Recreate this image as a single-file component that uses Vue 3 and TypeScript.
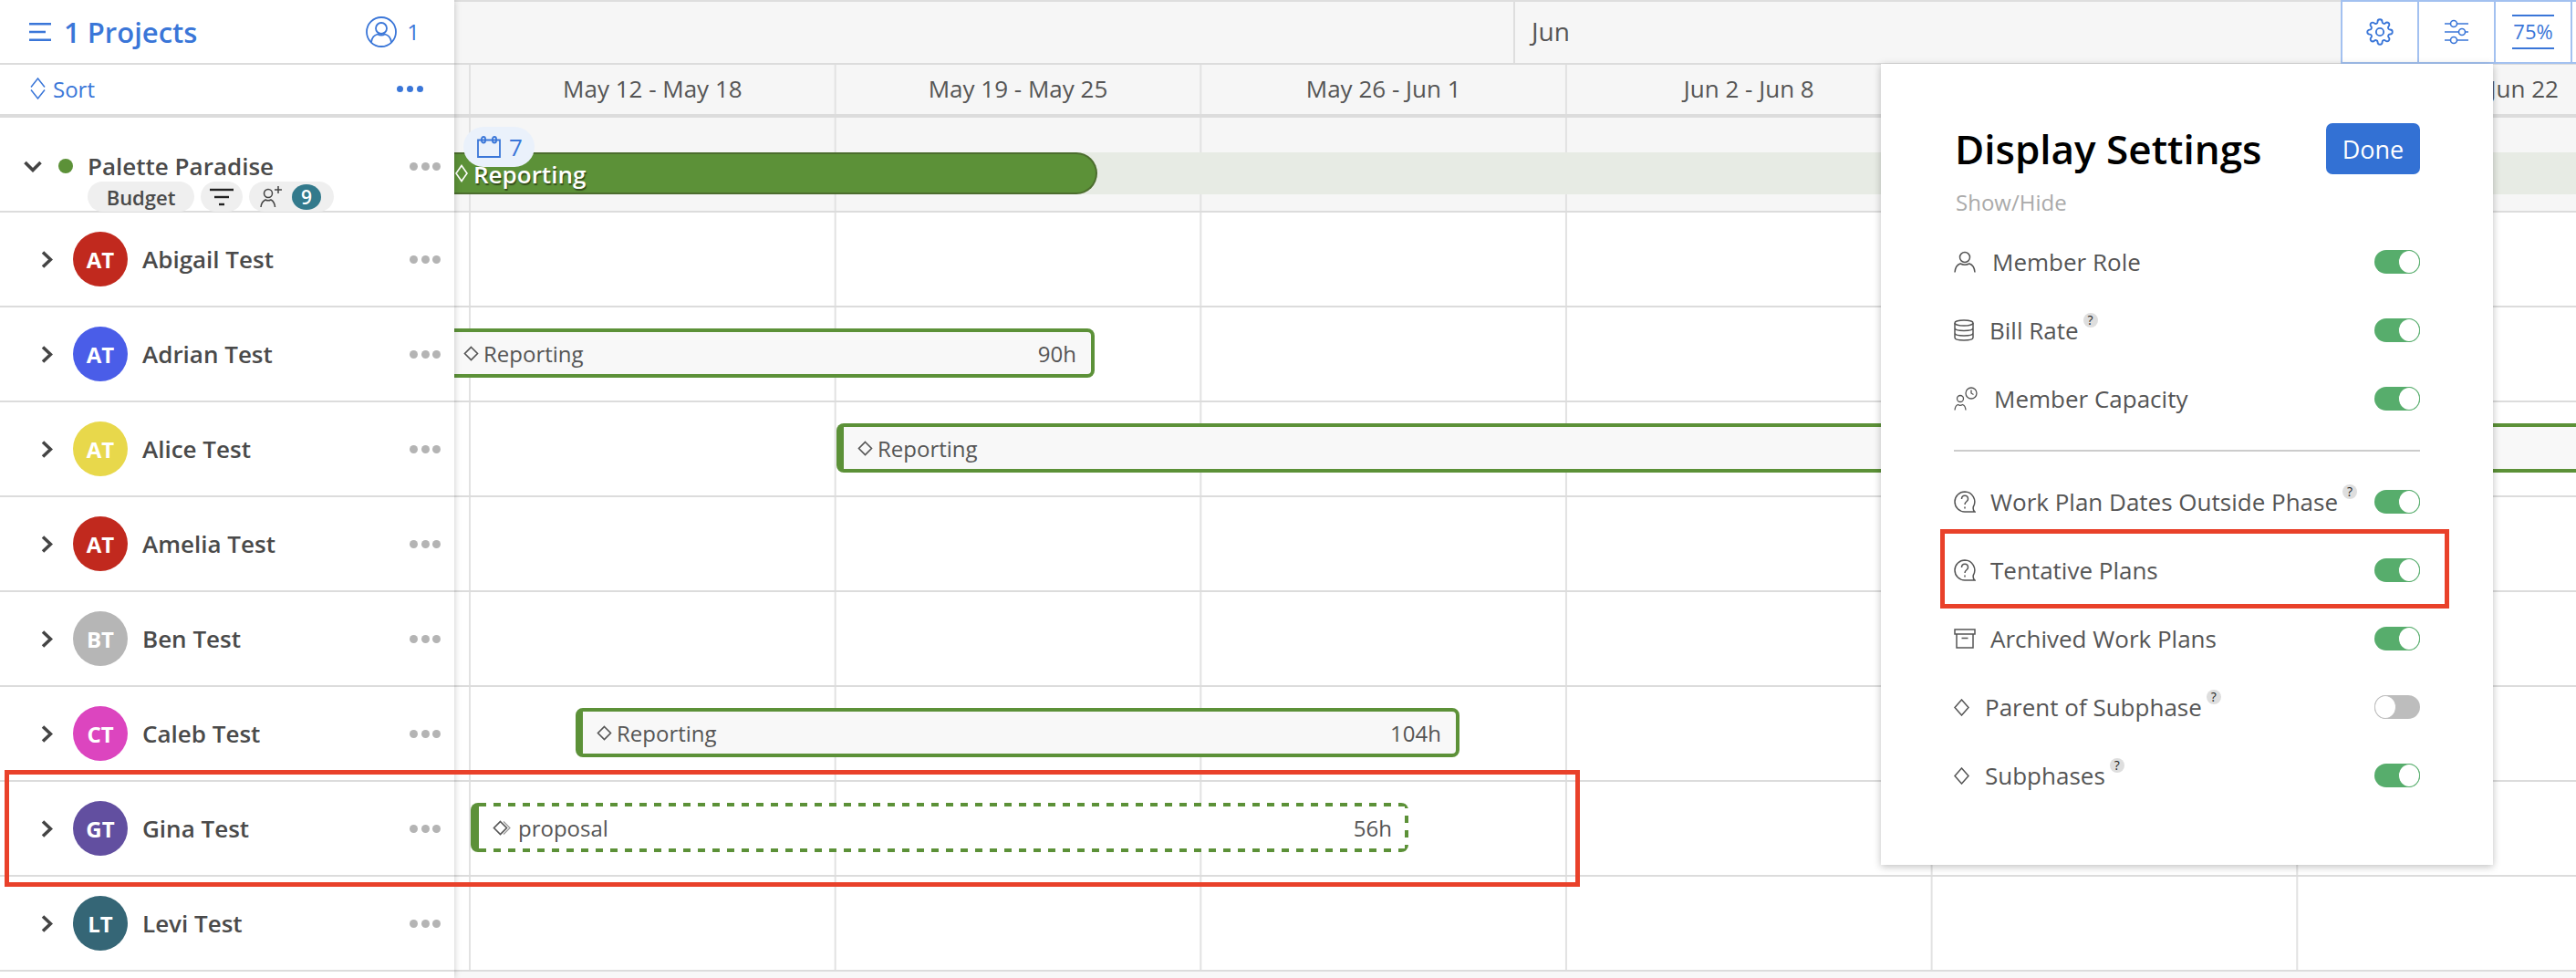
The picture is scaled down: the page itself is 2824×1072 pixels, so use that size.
<script setup lang="ts">
interface Bar {
  left: number
  width: number
  label: string
  hours?: string
  kind: 'solid' | 'open-left' | 'open-right' | 'tentative'
}
interface Person {
  initials: string
  color: string
  name: string
  bar?: Bar
}
interface Setting {
  icon: 'person' | 'db' | 'capacity' | 'question' | 'archive' | 'diamond'
  label: string
  help?: boolean
  on: boolean
  highlight?: boolean
}

const weeks = ['May 12 - May 18', 'May 19 - May 25', 'May 26 - Jun 1', 'Jun 2 - Jun 8', 'Jun 9 - Jun 15', 'Jun 16 - Jun 22']

const people: Person[] = [
  { initials: 'AT', color: '#c1291e', name: 'Abigail Test' },
  { initials: 'AT', color: '#4a5de8', name: 'Adrian Test', bar: { left: 0, width: 702, label: 'Reporting', hours: '90h', kind: 'open-left' } },
  { initials: 'AT', color: '#e8d84b', name: 'Alice Test', bar: { left: 419, width: 1960, label: 'Reporting', kind: 'open-right' } },
  { initials: 'AT', color: '#c1291e', name: 'Amelia Test' },
  { initials: 'BT', color: '#b6b6b6', name: 'Ben Test' },
  { initials: 'CT', color: '#dc45bf', name: 'Caleb Test', bar: { left: 133, width: 969, label: 'Reporting', hours: '104h', kind: 'solid' } },
  { initials: 'GT', color: '#624fa0', name: 'Gina Test', bar: { left: 18, width: 1028, label: 'proposal', hours: '56h', kind: 'tentative' } },
  { initials: 'LT', color: '#356676', name: 'Levi Test' }
]

const primarySettings: Setting[] = [
  { icon: 'person', label: 'Member Role', on: true },
  { icon: 'db', label: 'Bill Rate', help: true, on: true },
  { icon: 'capacity', label: 'Member Capacity', on: true }
]
const secondarySettings: Setting[] = [
  { icon: 'question', label: 'Work Plan Dates Outside Phase', help: true, on: true },
  { icon: 'question', label: 'Tentative Plans', on: true, highlight: true },
  { icon: 'archive', label: 'Archived Work Plans', on: true },
  { icon: 'diamond', label: 'Parent of Subphase', help: true, on: false },
  { icon: 'diamond', label: 'Subphases', help: true, on: true }
]
const groups = [primarySettings, secondarySettings]
</script>

<template>
  <div class="app">
    <aside class="left">
      <div class="left-top">
        <svg class="burger" width="24" height="20" viewBox="0 0 24 20" fill="none" stroke="#3a76d8" stroke-width="2.6">
          <path d="M0 1.3h24M0 10h18M0 18.7h24" />
        </svg>
        <span class="projects">1 Projects</span>
        <svg class="user" width="34" height="34" viewBox="0 0 34 34" fill="none" stroke="#3a76d8" stroke-width="1.8">
          <circle cx="17" cy="17" r="16" />
          <circle cx="17" cy="13" r="6" />
          <path d="M6 28c1-6 5-8 7-8.500c2.500 1.500 5.500 1.500 8 0c2 .5 6 2.500 7 8.500" />
        </svg>
        <span class="user-count">1</span>
      </div>
      <div class="left-sort">
        <svg width="17" height="24" viewBox="0 0 17 24" fill="none" stroke="#3a76d8" stroke-width="1.5">
          <path d="M1 10.500L8.500 1L16 10.500M1 13.500L8.500 23L16 13.500" />
        </svg>
        <span class="sort">Sort</span>
        <span class="blue-dots"><i></i><i></i><i></i></span>
      </div>
      <div class="project">
        <div class="project-title">
          <svg width="20" height="13" viewBox="0 0 20 13" fill="none" stroke="#444" stroke-width="3.600">
            <path d="M1.500 2L10 10.500L18.500 2" />
          </svg>
          <span class="status"></span>
          <span class="project-name">Palette Paradise</span>
          <span class="dots"><i></i><i></i><i></i></span>
        </div>
        <div class="pills">
          <span class="pill budget">Budget</span>
          <span class="pill filter">
            <svg width="28" height="20" viewBox="0 0 28 20" fill="none" stroke="#222">
              <path stroke-width="2.400" d="M1 2h26" />
              <path stroke-width="2.400" d="M6 10h16" />
              <path stroke-width="2.400" d="M11 18h6" />
            </svg>
          </span>
          <span class="pill members">
            <svg width="26" height="26" viewBox="0 0 26 26" fill="none" stroke="#444" stroke-width="1.500">
              <circle cx="9" cy="9" r="4.500" />
              <path d="M1 24c.5-5 3-7 5-8c2 1 4 1 6 0c2 1 4 3 4.500 8M20 1v8M16 5h8" />
            </svg>
            <span class="count">9</span>
          </span>
        </div>
      </div>
      <div v-for="person in people" :key="person.name" class="person">
        <svg width="13" height="19" viewBox="0 0 13 19" fill="none" stroke="#444" stroke-width="3.600">
          <path d="M2 1.500L10.500 9.500L2 17.500" />
        </svg>
        <span class="avatar" :style="{ background: person.color }">{{ person.initials }}</span>
        <span class="person-name">{{ person.name }}</span>
        <span class="dots"><i></i><i></i><i></i></span>
      </div>
    </aside>

    <main class="timeline">
      <div class="months">
        <div class="month-blank"></div>
        <div class="month">Jun</div>
        <div class="tools">
          <button class="tool">
            <svg width="30" height="30" viewBox="0 0 24 24" fill="none" stroke="#3a76d8" stroke-width="1.500">
              <circle cx="12" cy="12" r="3.300" />
              <path d="M19.400 15a1.650 1.650 0 0 0 .33 1.820l.06.06a2 2 0 0 1 0 2.830 2 2 0 0 1-2.830 0l-.06-.06a1.650 1.650 0 0 0-1.820-.33 1.650 1.650 0 0 0-1 1.510V21a2 2 0 0 1-2 2 2 2 0 0 1-2-2v-.09A1.650 1.650 0 0 0 9 19.400a1.650 1.650 0 0 0-1.820.33l-.06.06a2 2 0 0 1-2.830 0 2 2 0 0 1 0-2.830l.06-.06a1.650 1.650 0 0 0 .33-1.820 1.650 1.650 0 0 0-1.510-1H3a2 2 0 0 1-2-2 2 2 0 0 1 2-2h.09A1.650 1.650 0 0 0 4.600 9a1.650 1.650 0 0 0-.33-1.820l-.06-.06a2 2 0 0 1 0-2.830 2 2 0 0 1 2.830 0l.06.06a1.650 1.650 0 0 0 1.820.33H9a1.650 1.650 0 0 0 1-1.510V3a2 2 0 0 1 2-2 2 2 0 0 1 2 2v.09a1.650 1.650 0 0 0 1 1.510 1.650 1.650 0 0 0 1.820-.33l.06-.06a2 2 0 0 1 2.830 0 2 2 0 0 1 0 2.830l-.06.06a1.650 1.650 0 0 0-.33 1.820V9a1.650 1.650 0 0 0 1.510 1H21a2 2 0 0 1 2 2 2 2 0 0 1-2 2h-.09a1.650 1.650 0 0 0-1.510 1z" />
            </svg>
          </button>
          <button class="tool">
            <svg width="26" height="28" viewBox="0 0 26 28" fill="none" stroke="#3a76d8" stroke-width="1.600">
              <path d="M0 5h6M14 5h12M0 14h15M23 14h3M0 23h6M14 23h12" />
              <circle cx="10" cy="5" r="3.500" />
              <circle cx="19" cy="14" r="3.500" />
              <circle cx="10" cy="23" r="3.500" />
            </svg>
          </button>
          <button class="tool"><span class="zoom">75%</span></button>
          <button class="tool"></button>
        </div>
      </div>
      <div class="weeks gridded">
        <div v-for="week in weeks" :key="week" class="week">{{ week }}</div>
      </div>
      <div class="track project-track gridded">
        <div class="band"></div>
        <div class="phase">
          <svg width="14" height="20" viewBox="0 0 14 20" fill="none" stroke="#fff" stroke-width="1.600">
            <path d="M7 1.500L13 10L7 18.500L1 10Z" />
          </svg>
          <span>Reporting</span>
        </div>
        <div class="milestone">
          <svg width="26" height="24" viewBox="0 0 26 24" fill="none" stroke="#3a76d8" stroke-width="1.800">
            <path d="M1 4.500h24v18.500H1zM9 4.500h8" />
            <rect x="5" y="1" width="4" height="6.500" rx="2" />
            <rect x="17" y="1" width="4" height="6.500" rx="2" />
          </svg>
          <span>7</span>
        </div>
      </div>
      <div v-for="person in people" :key="person.name" class="track gridded">
        <div
          v-if="person.bar"
          class="bar"
          :class="person.bar.kind"
          :style="{ left: person.bar.left + 'px', width: person.bar.width + 'px' }"
        >
          <svg class="diamond" width="17" height="17" viewBox="0 0 17 17" fill="none" stroke="#555" stroke-width="1.600">
            <path d="M8.500 1.500L15.500 8.500L8.500 15.500L1.500 8.500Z" />
            <path v-if="person.bar.kind === 'tentative'" stroke="#999" stroke-width="1.200" d="M12 1.500L19 8.500L12 15.500" />
          </svg>
          <span class="bar-label">{{ person.bar.label }}</span>
          <span v-if="person.bar.hours" class="bar-hours">{{ person.bar.hours }}</span>
        </div>
      </div>
    </main>

    <section class="popup">
      <div class="popup-head">
        <h2>Display Settings</h2>
        <button class="done">Done</button>
      </div>
      <div class="show-hide">Show/Hide</div>
      <template v-for="(group, index) in groups" :key="index">
        <div v-if="index > 0" class="divider"><span></span></div>
        <div v-for="item in group" :key="item.label" class="setting" :class="'is-' + item.icon">
          <svg v-if="item.icon === 'person'" width="24" height="24" viewBox="0 0 24 24" fill="none" stroke="#555" stroke-width="1.500">
            <circle cx="12" cy="7" r="5.500" />
            <path d="M1 23.500c.5-6 3-8.500 6-9.500c3 1.500 7 1.500 10 0c3 1 5.500 3.500 6 9.500" />
          </svg>
          <svg v-else-if="item.icon === 'db'" width="22" height="24" viewBox="0 0 22 24" fill="none" stroke="#555" stroke-width="1.500">
            <ellipse cx="11" cy="4" rx="10" ry="3" />
            <path d="M1 4v16c0 2 4 3 10 3s10-1 10-3V4M1 9.500c0 2 4 3 10 3s10-1 10-3M1 15c0 2 4 3 10 3s10-1 10-3" />
          </svg>
          <svg v-else-if="item.icon === 'capacity'" width="26" height="26" viewBox="0 0 26 26" fill="none" stroke="#555" stroke-width="1.300">
            <circle cx="7" cy="13" r="3.500" />
            <path d="M1 25.500c.3-4 2-5.500 3.500-6c1.500 1 3.500 1 5 0c1.500.5 3.200 2 3.500 6" />
            <circle cx="19" cy="7" r="6" />
            <path d="M19 3.500V7l2.500 1.500" />
          </svg>
          <svg v-else-if="item.icon === 'question'" width="24" height="24" viewBox="0 0 24 24" fill="none" stroke="#555" stroke-width="1.500">
            <path d="M12 1a11 11 0 1 0 0 22h11c-2-1.500-2.200-3-1.700-5.500A11 11 0 0 0 12 1z" />
            <path d="M8.500 9c0-5 7-5 7 0c0 3-3.500 2.500-3.500 6M12 17.500v2" />
          </svg>
          <svg v-else-if="item.icon === 'archive'" width="24" height="22" viewBox="0 0 24 22" fill="none" stroke="#555" stroke-width="1.500">
            <path d="M1 1h22v5H1zM3 6v15h18V6M8.500 10.500h7" />
          </svg>
          <svg v-else width="17" height="19" viewBox="0 0 17 19" fill="none" stroke="#555" stroke-width="1.500">
            <path d="M8.500 1L16 9.500L8.500 18L1 9.500Z" />
          </svg>
          <span class="setting-label">{{ item.label }}</span>
          <span v-if="item.help" class="help">?</span>
          <span class="toggle" :class="{ off: !item.on }"><i></i></span>
          <span v-if="item.highlight" class="mark-setting"></span>
        </div>
      </template>
    </section>

    <div class="mark-row"></div>
  </div>
</template>

<style>
html, body { margin: 0; background: #fff; }
</style>

<style scoped>
.app {
  position: relative;
  display: flex;
  width: 2824px;
  height: 1072px;
  overflow: hidden;
  background: #fff;
  font-family: "Open Sans", "Noto Sans", sans-serif;
  color: #555;
}
.left {
  position: relative;
  z-index: 2;
  flex: 0 0 498px;
  background: #fff;
  box-shadow: 0 0 7px rgba(0, 0, 0, 0.22);
  display: flex;
  flex-direction: column;
}
.left-top {
  height: 71px;
  box-sizing: border-box;
  border-bottom: 2px solid #dcdcdc;
  display: flex;
  align-items: center;
  padding-left: 32px;
}
.burger { margin-right: 14px; }
.projects { font-size: 31px; font-weight: 600; color: #3a76d8; }
.user { margin-left: auto; }
.user-count { font-size: 24px; color: #3a76d8; margin: 0 38px 0 11px; }
.left-sort {
  height: 58px;
  box-sizing: border-box;
  border-bottom: 4px solid #dcdcdc;
  display: flex;
  align-items: center;
  padding: 0 34px 2px 33px;
}
.sort { font-size: 24px; color: #3a76d8; margin-left: 8px; }
.blue-dots { margin-left: auto; display: flex; gap: 4px; }
.blue-dots i { width: 7px; height: 7px; border-radius: 50%; background: #3a76d8; }
.project {
  height: 104px;
  box-sizing: border-box;
  border-bottom: 2px solid #dcdcdc;
  padding-top: 37px;
}
.project-title {
  display: flex;
  align-items: center;
  height: 32px;
  padding-left: 26px;
}
.status {
  width: 16px;
  height: 16px;
  border-radius: 50%;
  background: #5c9138;
  margin: 0 16px 0 18px;
}
.project-name, .person-name { font-size: 26px; font-weight: 600; color: #4a4a4a; }
.dots { margin-left: auto; margin-right: 15px; display: flex; gap: 3.5px; }
.dots i { width: 9px; height: 9px; border-radius: 50%; background: #b4b4b4; }
.pills {
  display: flex;
  gap: 7px;
  margin: 1px 0 0 96px;
  height: 33px;
}
.pill {
  height: 33px;
  border-radius: 17px;
  background: #efefef;
  display: flex;
  align-items: center;
  justify-content: center;
  flex: none;
}
.budget { width: 117px; font-size: 22px; font-weight: 600; color: #4a4a4a; }
.filter { width: 46px; }
.members { width: 93px; justify-content: flex-start; padding-left: 12px; box-sizing: border-box; gap: 9px; }
.count {
  width: 32px;
  height: 28px;
  border-radius: 50%;
  background: #337a8c;
  color: #fff;
  font-size: 21px;
  font-weight: 600;
  display: flex;
  align-items: center;
  justify-content: center;
}
.person {
  height: 104px;
  box-sizing: border-box;
  border-bottom: 2px solid #dcdcdc;
  display: flex;
  align-items: center;
  padding-left: 45px;
}
.avatar {
  width: 60px;
  height: 60px;
  border-radius: 50%;
  margin: 0 16px 0 22px;
  color: #fff;
  font-size: 24px;
  font-weight: 700;
  display: flex;
  align-items: center;
  justify-content: center;
  flex: none;
}
.timeline {
  flex: 1;
  min-width: 0;
  display: flex;
  flex-direction: column;
  background: #f8f8f8;
}
.months {
  height: 71px;
  box-sizing: border-box;
  display: flex;
  flex: none;
  background: #f6f6f6;
  border-top: 2px solid #dedede;
  border-bottom: 2px solid #dcdcdc;
}
.month-blank { flex: 0 0 1161px; }
.month {
  flex: 0 0 907px;
  box-sizing: border-box;
  border-left: 2px solid #dedede;
  padding-left: 18px;
  font-size: 28px;
  line-height: 64px;
  color: #555;
  font-weight: 500;
}
.tools { display: flex; flex: none; margin-top: -2px; height: 70px; }
.tool {
  flex: none;
  width: 84px;
  height: 70px;
  padding: 0;
  box-sizing: border-box;
  background: #fff;
  border: 2px solid #a3c1f0;
  border-right: 0;
  display: flex;
  align-items: center;
  justify-content: center;
}
.zoom {
  width: 46px;
  height: 34px;
  border-top: 2px solid #3a76d8;
  border-bottom: 2px solid #3a76d8;
  font-family: "Open Sans", sans-serif;
  font-size: 22px;
  font-weight: 500;
  line-height: 32px;
  color: #3a76d8;
  text-align: center;
}
.gridded {
  background-image: linear-gradient(90deg, #e2e2e2 2px, transparent 2px);
  background-size: 400.67px 100%;
  background-position: 16px 0;
  background-repeat: repeat-x;
}
.weeks {
  height: 58px;
  box-sizing: border-box;
  flex: none;
  display: flex;
  padding: 0 0 2px 17px;
  background-color: #f6f6f6;
  border-bottom: 4px solid #dcdcdc;
}
.week {
  flex: 0 0 400.67px;
  text-align: center;
  font-size: 26px;
  line-height: 52px;
  color: #555;
}
.track {
  position: relative;
  height: 104px;
  flex: none;
  box-sizing: border-box;
  border-bottom: 2px solid #dcdcdc;
  background-color: #fff;
}
.project-track { background-color: #f6f6f6; }
.band {
  position: absolute;
  left: 0;
  right: 0;
  top: 38px;
  height: 46px;
  background: #e7ebe4;
}
.phase {
  position: absolute;
  left: 0;
  top: 38px;
  width: 705px;
  height: 46px;
  box-sizing: border-box;
  background: #5c9138;
  border: 2px solid #4c6d2e;
  border-left: 0;
  border-radius: 0 23px 23px 0;
  display: flex;
  align-items: center;
  gap: 6px;
  padding-left: 1px;
  color: #fff;
  font-size: 26px;
  font-weight: 600;
  text-shadow: 1px 2px 1px rgba(40, 60, 20, 0.8);
}
.phase span { position: relative; top: 1px; }
.milestone {
  position: absolute;
  left: 10px;
  top: 10px;
  width: 78px;
  height: 44px;
  border-radius: 22px;
  background: #eaf1fb;
  display: flex;
  align-items: center;
  gap: 9px;
  padding-left: 15px;
  box-sizing: border-box;
  color: #3a76d8;
  font-size: 26px;
}
.bar {
  position: absolute;
  top: 23px;
  height: 54px;
  box-sizing: border-box;
  background: #f8f8f8;
  border: 4px solid #5c9138;
  border-radius: 8px;
  display: flex;
  align-items: center;
  padding: 0 16px 0 6px;
  font-size: 24px;
  color: #555;
}
.open-left { border-left: 0; border-radius: 0 8px 8px 0; padding-left: 10px; }
.open-right { border-right: 0; border-left-width: 8px; border-radius: 8px 0 0 8px; padding-left: 15px; }
.solid { border-left-width: 8px; padding-left: 15px; }
.tentative {
  background-color: #fff;
  background-image:
    repeating-linear-gradient(90deg, #5c9138 0 8px, transparent 8px 16px),
    repeating-linear-gradient(90deg, #5c9138 0 8px, transparent 8px 16px),
    repeating-linear-gradient(0deg, #5c9138 0 8px, transparent 8px 16px);
  background-size: 100% 4px, 100% 4px, 4px 100%;
  background-position: 0 0, 0 100%, 100% 0;
  background-repeat: no-repeat;
  border: 0;
  border-left: 9px solid #5c9138;
  padding-left: 15px;
  padding-right: 18px;
}
.diamond { flex: none; margin-right: 5px; overflow: visible; }
.tentative .diamond { margin-right: 11px; }
.bar-hours { margin-left: auto; }
.popup {
  position: absolute;
  z-index: 5;
  left: 2062px;
  top: 70px;
  width: 671px;
  height: 878px;
  box-sizing: border-box;
  padding: 65px 80px 0;
  background: #fff;
  box-shadow: 0 2px 8px rgba(0, 0, 0, 0.25);
}
.popup-head {
  display: flex;
  align-items: center;
  justify-content: space-between;
  height: 56px;
}
h2 {
  margin: 0;
  font-size: 44px;
  font-weight: 600;
  color: #000;
  padding-left: 1px;
}
.done {
  width: 103px;
  height: 56px;
  border: 0;
  border-radius: 7px;
  background: #3371d4;
  color: #fff;
  font-family: "Open Sans", sans-serif;
  font-size: 27px;
  font-weight: 500;
}
.show-hide {
  margin-top: 15px;
  padding-left: 2px;
  height: 32px;
  line-height: 32px;
  font-size: 24px;
  color: #aaa;
  margin-bottom: 11.500px;
}
.setting {
  position: relative;
  height: 75px;
  display: flex;
  align-items: center;
  font-size: 26px;
  color: #555;
}
.setting svg { flex: none; }
.setting-label { margin-left: 16px; }
.is-person .setting-label { margin-left: 18px; }
.is-db .setting-label { margin-left: 17px; }
.is-capacity .setting-label { margin-left: 18px; }
.is-diamond .setting-label { margin-left: 17px; }
.help {
  flex: none;
  width: 16px;
  height: 16px;
  border-radius: 50%;
  background: #dedede;
  color: #222;
  font-size: 14px;
  line-height: 16px;
  text-align: center;
  margin: 0 0 22px 5px;
}
.toggle {
  position: relative;
  margin-left: auto;
  flex: none;
  width: 50px;
  height: 26px;
  border-radius: 13px;
  background: #57ad6c;
}
.toggle i {
  position: absolute;
  right: 0;
  top: 0;
  width: 24px;
  height: 26px;
  box-sizing: border-box;
  border-radius: 50%;
  background: #fff;
  border: 1.5px solid #57ad6c;
}
.toggle.off { background: #bdbdbd; }
.toggle.off i { right: auto; left: 0; border-color: #bdbdbd; }
.divider { height: 38px; display: flex; align-items: center; }
.divider span { flex: 1; height: 2px; background: #cccccc; }
.mark-setting {
  position: absolute;
  left: -15px;
  right: -32px;
  top: -8px;
  bottom: -4px;
  border: 5px solid #e9412a;
}
.mark-row {
  position: absolute;
  z-index: 4;
  left: 5px;
  top: 844px;
  width: 1727px;
  height: 128px;
  box-sizing: border-box;
  border: 5px solid #e9412a;
}
</style>
